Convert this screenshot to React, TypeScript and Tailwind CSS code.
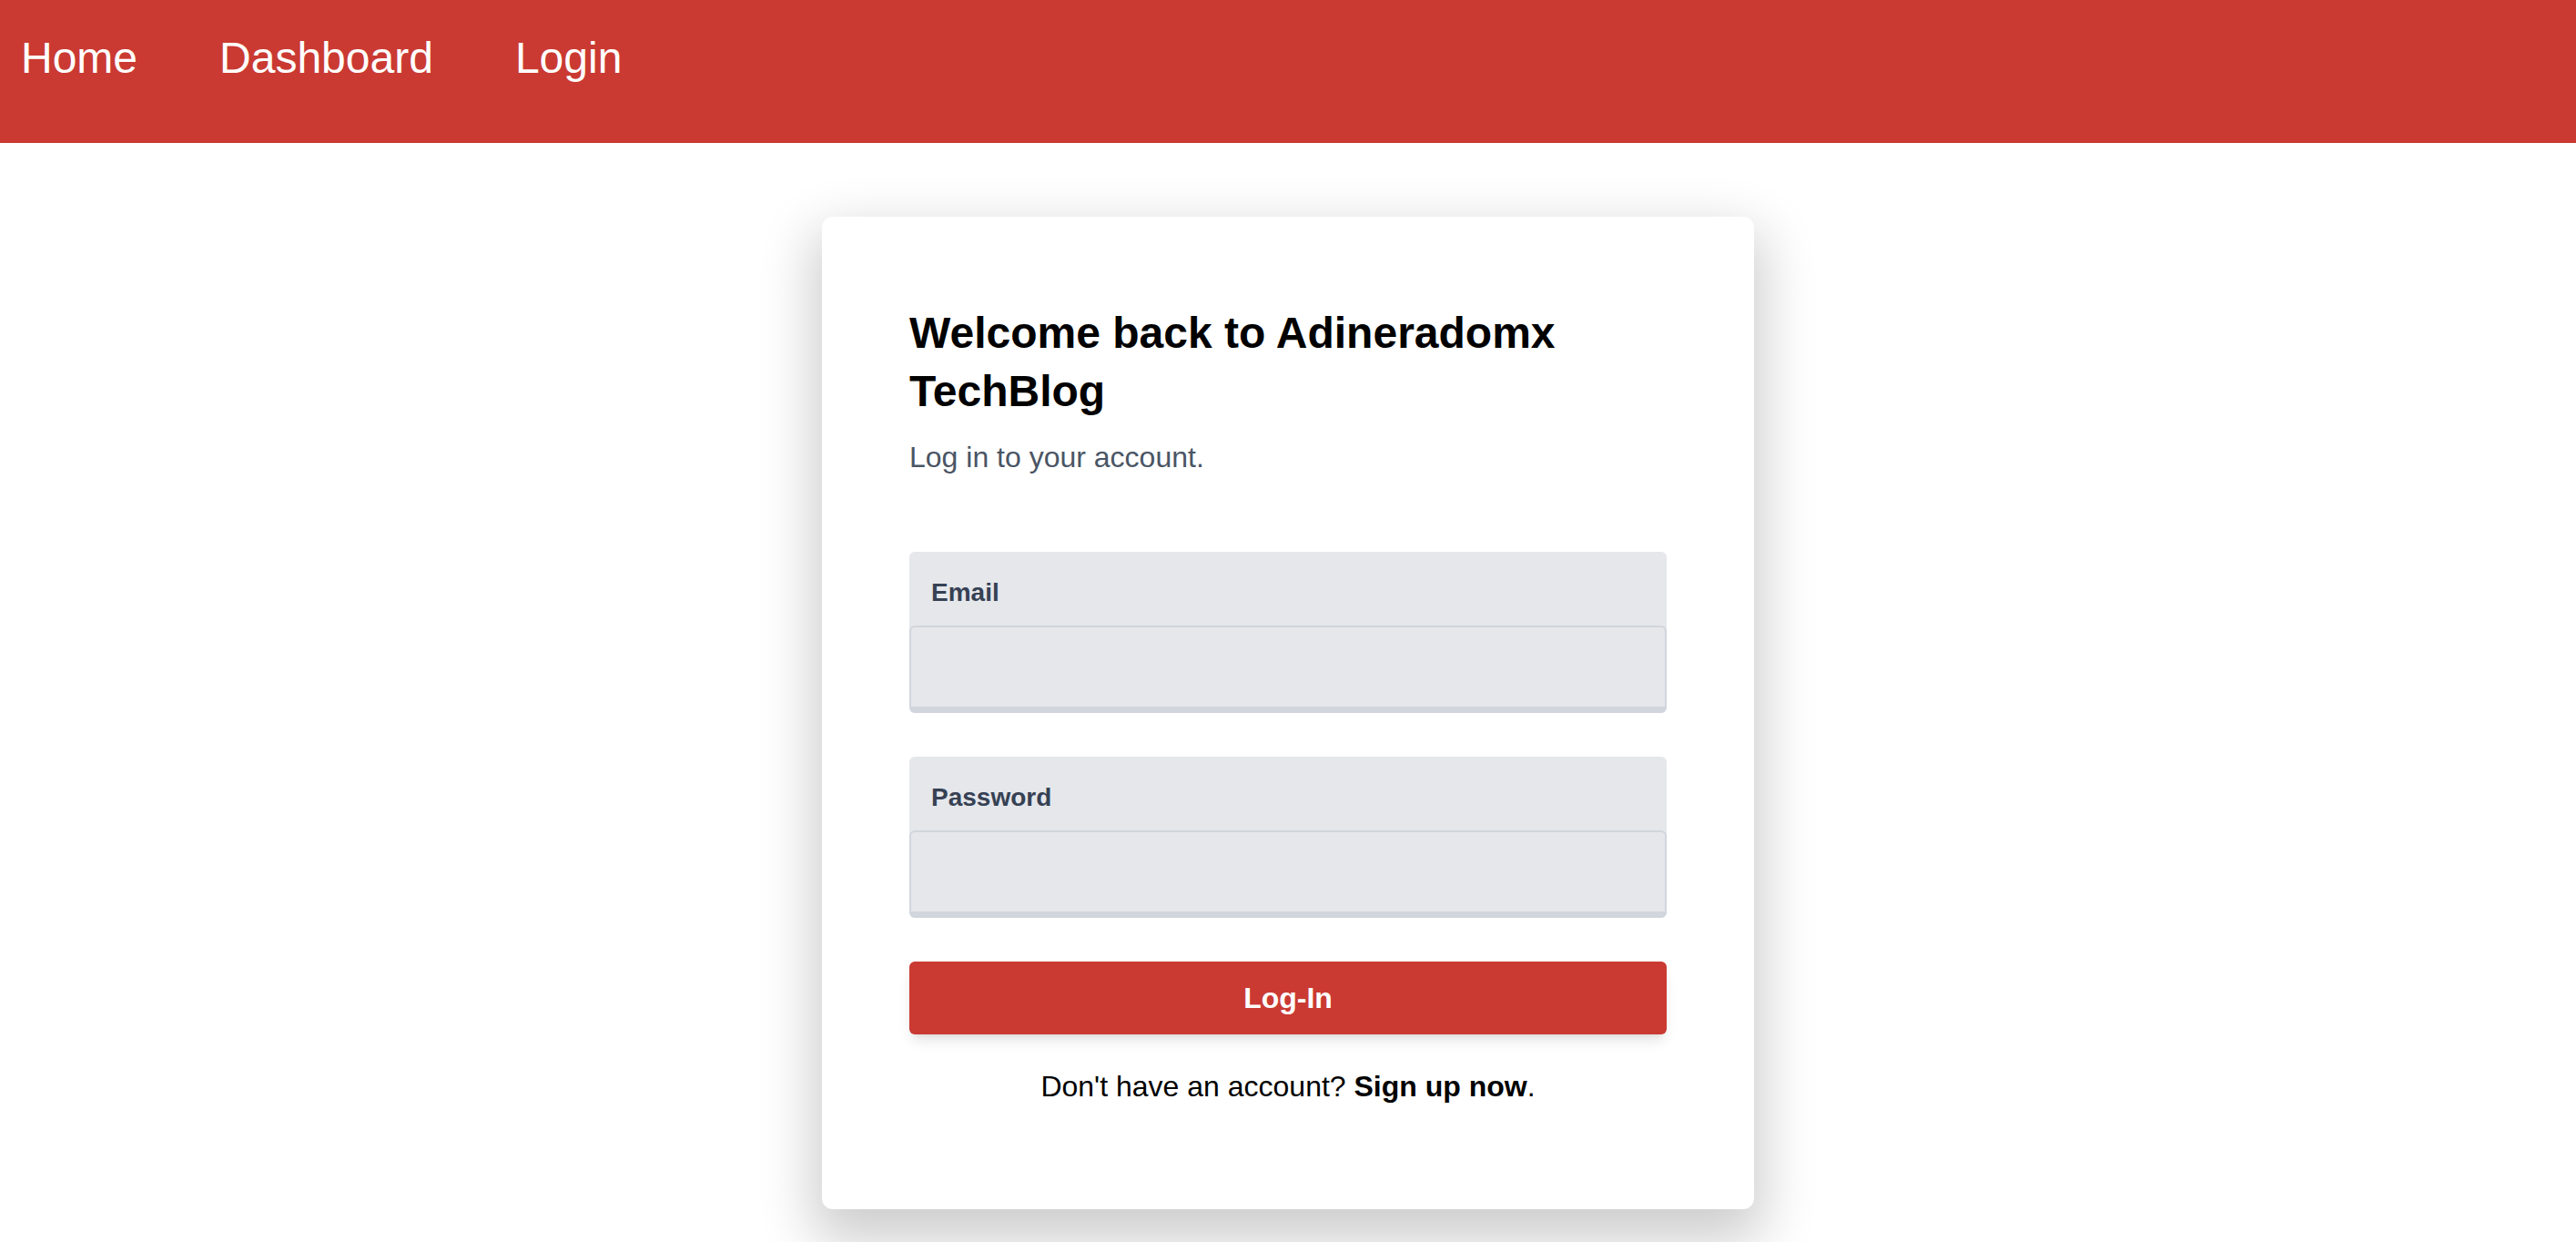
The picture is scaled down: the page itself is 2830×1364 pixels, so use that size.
import React from "react";

export default function App() {
  return (
    <div
      className="min-h-screen bg-white"
      style={{ fontFamily: '"Liberation Sans", Arial, Helvetica, sans-serif' }}
    >
      <nav className="flex h-[157px] items-start gap-[90px] bg-[#ca3a32] pl-[23px] pt-[40px]">
        <a href="#" className="text-[48px] leading-[48px] text-white">Home</a>
        <a href="#" className="text-[48px] leading-[48px] text-white">Dashboard</a>
        <a href="#" className="text-[48px] leading-[48px] text-white">Login</a>
      </nav>

      <main className="flex justify-center pt-[81px]">
        <div className="w-[1024px] rounded-xl bg-white px-24 pt-24 pb-[111px] shadow-[0_25px_60px_10px_rgba(0,0,0,0.2)]">
          <h1 className="text-[48px] font-bold leading-[64px] text-black">
            Welcome back to Adineradomx TechBlog
          </h1>
          <p className="mt-4 text-[32px] leading-[48px] text-gray-600">
            Log in to your account.
          </p>

          <form className="mt-20 flex flex-col" onSubmit={(e) => e.preventDefault()}>
            <div className="rounded-md bg-gray-200">
              <label className="block px-6 pt-6 pb-[15px] text-[28px] font-bold leading-[42px] text-gray-700">
                Email
              </label>
              <input
                type="email"
                className="block h-[96px] w-full rounded-md border-2 border-b-[7px] border-gray-300 bg-gray-200 px-6 text-[28px] outline-none"
              />
            </div>

            <div className="mt-12 rounded-md bg-gray-200">
              <label className="block px-6 pt-6 pb-[15px] text-[28px] font-bold leading-[42px] text-gray-700">
                Password
              </label>
              <input
                type="password"
                className="block h-[96px] w-full rounded-md border-2 border-b-[7px] border-gray-300 bg-gray-200 px-6 text-[28px] outline-none"
              />
            </div>

            <button
              type="submit"
              className="mt-12 h-20 w-full rounded-md bg-[#ca3a32] text-[32px] font-bold text-white shadow-lg"
            >
              Log-In
            </button>

            <p className="mt-[33px] text-center text-[32px] leading-[48px] text-black">
              Don't have an account? <span className="font-bold">Sign up now</span>.
            </p>
          </form>
        </div>
      </main>
    </div>
  );
}
